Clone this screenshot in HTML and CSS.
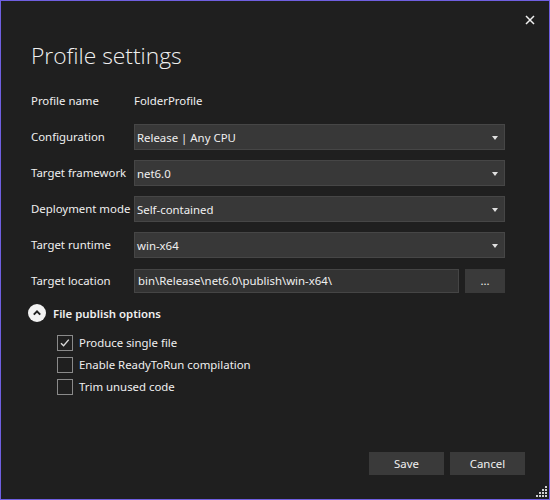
FILE: index.html
```html
<!DOCTYPE html>
<html>
  <head>
    <meta charset="UTF-8" />
    <title>Profile settings</title>
    <link rel="stylesheet" href="styles.css">
  </head>
  <body>
    <div class="dialog">
      <div class="close-btn" id="closeBtn">
        <svg viewBox="0 0 10 10" width="10" height="10">
          <path d="M1 1L9 9M9 1L1 9" stroke="#f0f0f0" stroke-width="1.5" />
        </svg>
      </div>

      <h1>Profile settings</h1>

      <div class="form">
        <div class="label">Profile name</div>
        <div class="value">FolderProfile</div>

        <div class="label">Configuration</div>
        <div class="dropdown">
          <span>Release | Any CPU</span>
          <span class="caret"></span>
        </div>

        <div class="label">Target framework</div>
        <div class="dropdown">
          <span>net6.0</span>
          <span class="caret"></span>
        </div>

        <div class="label">Deployment mode</div>
        <div class="dropdown">
          <span>Self-contained</span>
          <span class="caret"></span>
        </div>

        <div class="label">Target runtime</div>
        <div class="dropdown">
          <span>win-x64</span>
          <span class="caret"></span>
        </div>

        <div class="label">Target location</div>
        <div class="location">
          <div class="text-field">bin\Release\net6.0\publish\win-x64\</div>
          <div class="browse-btn">...</div>
        </div>
      </div>

      <div class="section-header">
        <span class="expander">
          <svg viewBox="0 0 18 18" width="18" height="18">
            <circle cx="9" cy="9" r="9" fill="#f2f2f2" />
            <path d="M5.8 10.6L9 7.4L12.2 10.6" fill="none" stroke="#1f1f1f" stroke-width="2" />
          </svg>
        </span>
        File publish options
      </div>

      <div class="options">
        <label class="option">
          <span class="checkbox checked">
            <svg viewBox="0 0 16 16" width="16" height="16">
              <path d="M4 8.2L6.6 10.8L11.8 4.6" fill="none" stroke="#d8d8d8" stroke-width="1.4" />
            </svg>
          </span>
          Produce single file
        </label>
        <label class="option">
          <span class="checkbox"></span>
          Enable ReadyToRun compilation
        </label>
        <label class="option">
          <span class="checkbox"></span>
          Trim unused code
        </label>
      </div>

      <div class="footer">
        <button class="btn">Save</button>
        <button class="btn">Cancel</button>
      </div>

      <div class="grip">
        <svg viewBox="0 0 12 12" width="12" height="12">
          <rect x="9" y="0" width="2" height="2" fill="#d0d0d0" />
          <rect x="6" y="3" width="2" height="2" fill="#d0d0d0" />
          <rect x="9" y="3" width="2" height="2" fill="#d0d0d0" />
          <rect x="3" y="6" width="2" height="2" fill="#d0d0d0" />
          <rect x="6" y="6" width="2" height="2" fill="#d0d0d0" />
          <rect x="9" y="6" width="2" height="2" fill="#d0d0d0" />
          <rect x="0" y="9" width="2" height="2" fill="#d0d0d0" />
          <rect x="3" y="9" width="2" height="2" fill="#d0d0d0" />
          <rect x="6" y="9" width="2" height="2" fill="#d0d0d0" />
          <rect x="9" y="9" width="2" height="2" fill="#d0d0d0" />
        </svg>
      </div>
    </div>
  </body>
</html>
```

FILE: styles.css
```css
body {
  margin: 0;
  padding: 0;
  background-color: #1f1f1f;
  color: #f0f0f0;
  font-family: "Noto Sans", "Open Sans", Arial, sans-serif;
  font-size: 11.4px;
  overflow: hidden;
}
.dialog {
  position: relative;
  box-sizing: border-box;
  width: 550px;
  height: 500px;
  border: 1px solid #6f5fe0;
  background-color: #1f1f1f;
  padding: 35px 44px 0 30px;
  display: flex;
  flex-direction: column;
}
.close-btn {
  position: absolute;
  top: 14px;
  right: 14px;
  width: 10px;
  height: 10px;
  display: flex;
}
h1 {
  margin: 0;
  font-family: "Open Sans", "Noto Sans", sans-serif;
  font-weight: 300;
  font-size: 22.8px;
  line-height: 40px;
  color: #f0f0f0;
}
.form {
  margin-top: 12px;
  display: grid;
  grid-template-columns: 103px 1fr;
  grid-auto-rows: 26px;
  row-gap: 10px;
  align-items: center;
}
.label,
.value {
  line-height: 26px;
  white-space: nowrap;
}
.dropdown {
  box-sizing: border-box;
  height: 26px;
  background-color: #383838;
  border: 1px solid #464646;
  display: flex;
  align-items: center;
  justify-content: space-between;
  padding: 0 6px 0 2px;
}
.caret {
  width: 0;
  height: 0;
  border-left: 3.5px solid transparent;
  border-right: 3.5px solid transparent;
  border-top: 4px solid #e0e0e0;
  margin-top: 1px;
}
.location {
  display: flex;
  gap: 6px;
  height: 24px;
}
.text-field {
  flex-grow: 1;
  box-sizing: border-box;
  background-color: #333333;
  border: 1px solid #454545;
  padding: 0 3px;
  line-height: 22px;
}
.browse-btn {
  width: 40px;
  background-color: #3a3a3a;
  text-align: center;
  line-height: 24px;
}
.section-header {
  margin-top: 9px;
  margin-left: -3px;
  display: flex;
  align-items: center;
  gap: 7px;
  font-weight: 600;
  height: 20px;
}
.expander {
  display: flex;
}
.options {
  margin-top: 11px;
  margin-left: 26px;
  display: flex;
  flex-direction: column;
  gap: 5px;
}
.option {
  display: flex;
  align-items: center;
  gap: 6px;
  height: 17px;
}
.checkbox {
  box-sizing: border-box;
  width: 16px;
  height: 16px;
  border: 1px solid #8a8a8a;
  display: flex;
  align-items: center;
  justify-content: center;
}
.checkbox svg {
  margin: -1px;
}
.footer {
  margin-top: auto;
  margin-right: -20px;
  margin-bottom: 24px;
  display: flex;
  justify-content: flex-end;
  gap: 6px;
}
.btn {
  width: 75px;
  height: 23px;
  border: none;
  background-color: #3a3a3a;
  color: #f0f0f0;
  font-family: "Noto Sans", "Open Sans", Arial, sans-serif;
  font-size: 11.4px;
  padding: 0;
}
.grip {
  position: absolute;
  right: 1px;
  bottom: 1px;
  display: flex;
}
```
